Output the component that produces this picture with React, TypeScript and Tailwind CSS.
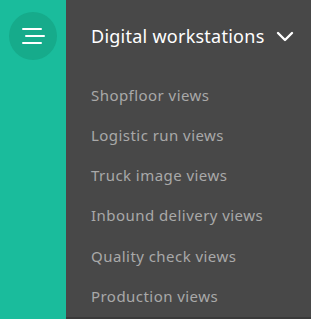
import React from "react";

const items = [
  "Shopfloor views",
  "Logistic run views",
  "Truck image views",
  "Inbound delivery views",
  "Quality check views",
  "Production views",
];

export default function App() {
  return (
    <div
      className="flex h-[319px] w-[311px] overflow-hidden"
      style={{ fontFamily: '"Noto Sans", sans-serif' }}
    >
      <div className="flex w-[66px] shrink-0 justify-center bg-[#1abc9c] pt-3">
        <button className="flex h-12 w-12 flex-col items-center justify-center gap-[5px] rounded-full bg-[#16ab8b]">
          <span className="ml-[-3px] block h-[2px] w-[20px] rounded bg-white" />
          <span className="ml-[3px] block h-[2px] w-[20px] rounded bg-white" />
          <span className="ml-[-3px] block h-[2px] w-[20px] rounded bg-white" />
        </button>
      </div>
      <div className="flex flex-1 flex-col">
        <div className="flex flex-1 flex-col bg-[#484848] pl-[25px]">
          <div className="flex h-[72px] items-center pt-[1px]">
            <span className="text-[18px] tracking-[0.25px] text-white">Digital workstations</span>
            <svg className="ml-[11px]" width="18" height="11" viewBox="0 0 18 11">
              <path d="M2 2 L9 9 L16 2" fill="none" stroke="white" strokeWidth="2.4" strokeLinecap="round" strokeLinejoin="round" />
            </svg>
          </div>
          <ul className="flex flex-col pt-[3px]">
            {items.map((t) => (
              <li key={t} className="flex h-[40.2px] items-center text-[15px] tracking-[0.45px] text-[#a9a9a9]">
                {t}
              </li>
            ))}
          </ul>
        </div>
        <div className="h-[2px] bg-[#3a3a3a]" />
      </div>
    </div>
  );
}
